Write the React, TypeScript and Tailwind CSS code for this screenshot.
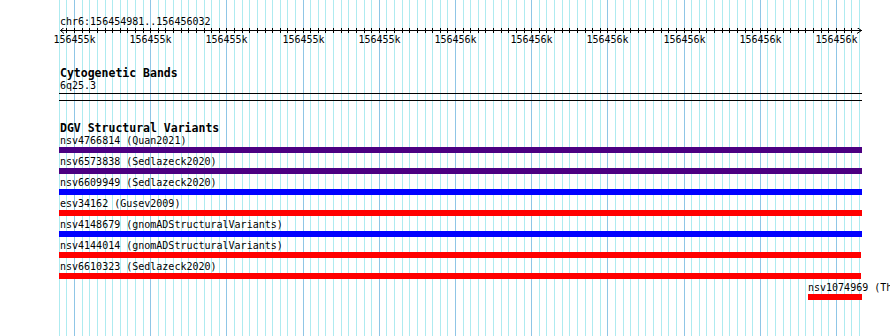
import React from "react";

// grid geometry taken from the track view: 10 minor steps per major label
const GRID_START = 58.8;
const STEP = 7.619;
const GRID_COUNT = 106;

const majors = [
  "156455k",
  "156455k",
  "156455k",
  "156455k",
  "156455k",
  "156456k",
  "156456k",
  "156456k",
  "156456k",
  "156456k",
  "156456k",
];

interface Feature {
  label: string;
  color: string;
  short?: boolean;
}

const features: Feature[] = [
  { label: "nsv4766814 (Quan2021)", color: "bg-[#4b0082]" },
  { label: "nsv6573838 (Sedlazeck2020)", color: "bg-[#4b0082]" },
  { label: "nsv6609949 (Sedlazeck2020)", color: "bg-[#0000ff]" },
  { label: "esv34162 (Gusev2009)", color: "bg-[#ff0000]" },
  { label: "nsv4148679 (gnomADStructuralVariants)", color: "bg-[#0000ff]" },
  { label: "nsv4144014 (gnomADStructuralVariants)", color: "bg-[#ff0000]", short: true },
  { label: "nsv6610323 (Sedlazeck2020)", color: "bg-[#ff0000]", short: true },
];

const GridLines: React.FC = () => (
  <svg className="absolute inset-0" width={890} height={336}>
    {Array.from({ length: GRID_COUNT }).map((_, i) => {
      const x = Math.round(GRID_START + i * STEP) + 0.5;
      const major = (i - 2) % 10 === 0;
      return (
        <line
          key={i}
          x1={x}
          x2={x}
          y1={0}
          y2={336}
          stroke={major ? "#8fc6e6" : "#aeebf0"}
          strokeWidth={1}
        />
      );
    })}
  </svg>
);

const Ruler: React.FC = () => (
  <svg width={890} height={18} className="block">
    <line x1={60} x2={862} y1={2.5} y2={2.5} stroke="#000" />
    <polyline points="64,-0.5 60.5,2.5 64,5.5" fill="none" stroke="#000" />
    <polyline points="857,-0.5 861.5,2.5 857,5.5" fill="none" stroke="#000" />
    {Array.from({ length: GRID_COUNT }).map((_, i) => {
      const x = Math.round(GRID_START + i * STEP) + 0.5;
      if (x < 62 || x > 858) return null;
      return <line key={i} x1={x} x2={x} y1={0} y2={5} stroke="#000" />;
    })}
    {majors.map((m, i) => {
      const x = Math.round(GRID_START + (i * 10 + 2) * STEP) + 0.5;
      return (
        <text
          key={i}
          x={x}
          y={15}
          textAnchor="middle"
          fontSize={10}
          fontFamily='"DejaVu Sans Mono", monospace'
          fill="#000"
        >
          {m}
        </text>
      );
    })}
  </svg>
);

export default function App() {
  return (
    <div className="relative w-[890px] h-[336px] overflow-hidden bg-white text-black font-['DejaVu_Sans_Mono',monospace] text-[10px] leading-[12px]">
      <GridLines />
      <div className="relative flex flex-col">
        <div className="pt-[16px] pl-[60px] whitespace-nowrap">chr6:156454981..156456032</div>
        <Ruler />

        <div className="mt-[22px] pl-[60px] font-bold text-[11.5px] leading-[11px] whitespace-nowrap">Cytogenetic Bands</div>
        <div className="mt-px pl-[60px] whitespace-nowrap">6q25.3</div>
        <div className="ml-[59px] w-[803px] mt-px h-px bg-black" />
        <div className="ml-[59px] w-[803px] mt-[6px] h-px bg-black" />

        <div className="mt-[22px] pl-[60px] font-bold text-[11.5px] leading-[11px] whitespace-nowrap">DGV Structural Variants</div>
        <div className="mt-px flex flex-col">
          {features.map((f) => (
            <div key={f.label} className="flex flex-col pb-[3px]">
              <div className="pl-[60px] whitespace-nowrap">{f.label}</div>
              <div className={`ml-[59px] h-[6px] ${f.short ? "w-[802px]" : "w-[803px]"} ${f.color}`} />
            </div>
          ))}
          <div className="flex flex-col pl-[808px]">
            <div className="whitespace-nowrap">nsv1074969 (Thousand_Genomes)</div>
            <div className="w-[54px] h-[6px] bg-[#ff0000]" />
          </div>
        </div>
      </div>
    </div>
  );
}
